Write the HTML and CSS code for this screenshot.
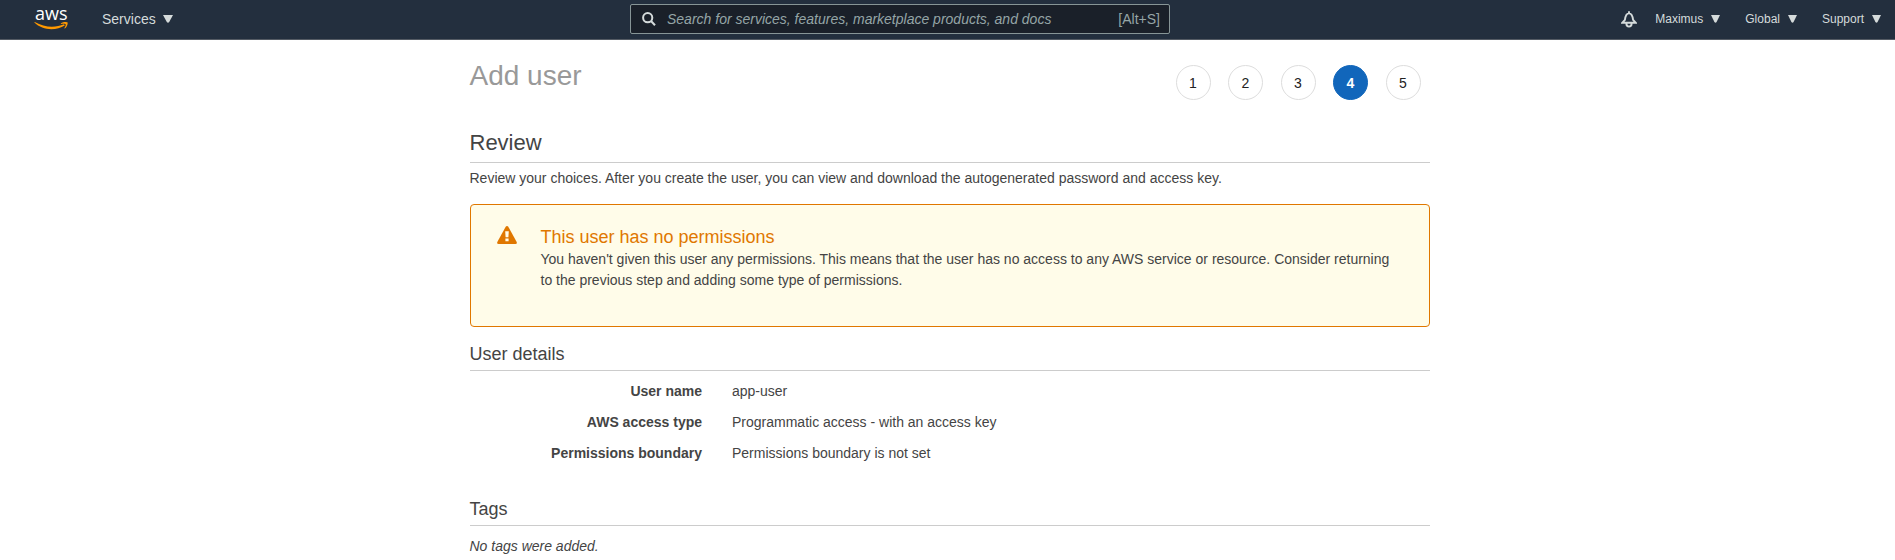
FILE: index.html
```html
<!DOCTYPE html>
<html lang="en">
<head>
<meta charset="utf-8">
<title>Add user</title>
<link rel="stylesheet" href="styles.css">
</head>
<body>
<header class="topbar">
  <div class="brand">
    <span class="brand-name">aws</span>
    <svg class="brand-smile" width="34" height="8" viewBox="0 0 34 8"><path d="M.3.600C8.500 8.700 22 9 30.800 3.600L30 2.200C21.500 6 10.500 5.600.8 0z" fill="#f90"/><path d="M26.800 1.300C29.500-.4 33-.2 33.600.6 34 1.700 32.800 5.200 30.900 6.600L30.300 6.200C31.600 4.100 32 2.700 31.600 2.200 31.200 1.600 29 1.800 27 1.900z" fill="#f90"/></svg>
  </div>
  <button class="nav services">Services <svg class="caret" width="10" height="8" viewBox="0 0 10 8"><path d="M0 0h10L6.200 7Q5 8.500 3.800 7z"/></svg></button>
  <div class="search">
    <svg class="search-icon" width="14" height="14" viewBox="0 0 14 14"><circle cx="5.700" cy="5.700" r="4.600"/><path d="M9 9l4 4.300"/></svg>
    <span class="search-hint">Search for services, features, marketplace products, and docs</span>
    <span class="search-key">[Alt+S]</span>
  </div>
  <div class="tools">
    <svg class="bell" width="16" height="17" viewBox="0 0 16 17"><path d="M1.200 11.800h13.600L12.100 8.900C11.600 5 11 2.400 8 2.400S4.400 5 3.900 8.900zM8 2.400V.3M5.400 12.800c0 3.700 5.200 3.700 5.200 0"/></svg>
    <button class="nav account">Maximus <svg class="caret" width="9" height="8" viewBox="0 0 10 8" preserveAspectRatio="none"><path d="M0 0h10L6.200 7Q5 8.500 3.800 7z"/></svg></button>
    <button class="nav region">Global <svg class="caret" width="9" height="8" viewBox="0 0 10 8" preserveAspectRatio="none"><path d="M0 0h10L6.200 7Q5 8.500 3.800 7z"/></svg></button>
    <button class="nav support">Support <svg class="caret" width="9" height="8" viewBox="0 0 10 8" preserveAspectRatio="none"><path d="M0 0h10L6.200 7Q5 8.500 3.800 7z"/></svg></button>
  </div>
</header>
<main class="page">
  <div class="page-head">
    <h1 class="page-title">Add user</h1>
    <ol class="steps">
      <li class="step">1</li><li class="step">2</li><li class="step">3</li><li class="step current">4</li><li class="step">5</li>
    </ol>
  </div>
  <h2 class="review-title">Review</h2>
  <p class="intro">Review your choices. After you create the user, you can view and download the autogenerated password and access key.</p>
  <section class="alert">
    <svg class="alert-icon" width="20" height="18" viewBox="0 0 20 18"><path d="M10 0Q10.800 0 11.300.8L19.700 16Q20.300 18 18.500 18h-17Q-.3 18 .3 16L8.700.8Q9.200 0 10 0z" fill="#e07700"/><path d="M8.200 5.300h3.600l-.4 6H8.600zM8.400 12.600h3.200v2.700H8.400z" fill="#fffce9"/></svg>
    <div>
      <h3 class="alert-title">This user has no permissions</h3>
      <p class="alert-text">You haven't given this user any permissions. This means that the user has no access to any AWS service or resource. Consider returning to the previous step and adding some type of permissions.</p>
    </div>
  </section>
  <h3 class="section-title">User details</h3>
  <dl class="details">
    <dt>User name</dt><dd>app-user</dd>
    <dt>AWS access type</dt><dd>Programmatic access - with an access key</dd>
    <dt>Permissions boundary</dt><dd>Permissions boundary is not set</dd>
  </dl>
  <h3 class="section-title">Tags</h3>
  <p class="empty">No tags were added.</p>
</main>
</body>
</html>
```
FILE: styles.css
```css
* { box-sizing: border-box; margin: 0; padding: 0; }
body { height: 560px; overflow: hidden; background: #fff; color: #444; font: 14px/21px "Liberation Sans", Arial, sans-serif; }
.topbar { height: 40px; background: #232f3e; border-bottom: 1px solid #545b64; display: grid; grid-template-columns: 102px 528px 540px 1fr; align-items: start; }
.brand { padding: 4px 0 0 34px; display: flex; flex-direction: column; }
.brand-name { height: 18px; padding-left: 1px; font: 500 18px/18px "Open Sans", "Noto Sans", sans-serif; color: #fff; }
.brand-smile { display: block; }
.nav { border: 0; background: none; color: #d5dbdb; font: 12px/38px "Liberation Sans", Arial, sans-serif; display: flex; align-items: center; white-space: nowrap; }
.services { font-size: 14px; gap: 7px; }
.caret { fill: #d5dbdb; flex: none; }
.search { height: 30px; margin-top: 4px; border: 1px solid #879596; border-radius: 2px; background: #1a2029; display: flex; align-items: center; padding: 0 9px 0 11px; font-size: 14px; color: #95a5a6; }
.search-icon { fill: none; stroke: #d5dbdb; stroke-width: 2; margin-right: 11px; }
.search-hint { font-style: italic; flex: 1; }
.tools { height: 38px; display: flex; align-items: center; justify-content: flex-end; padding-right: 14px; }
.tools .nav { gap: 8px; }
.bell { fill: none; stroke: #d5dbdb; stroke-width: 1.900; margin-right: 18px; }
.region { margin: 0 25px; }
.page { width: 960px; margin-left: 469.5px; }
.page-head { height: 86px; display: flex; justify-content: space-between; padding: 19px 9px 0 0; }
.page-title { padding-top: 1px; font-size: 28px; font-weight: 400; line-height: 32px; color: #999; }
.steps { list-style: none; display: flex; gap: 17.5px; padding-top: 6px; }
.step { width: 35px; height: 35px; border: 1px solid #ddd; border-radius: 50%; text-align: center; line-height: 35px; color: #222; }
.current { background: #1166bb; border-color: #1166bb; color: #fff; font-weight: 700; }
.review-title { height: 37px; border-bottom: 1px solid #ccc; font-size: 22px; font-weight: 400; line-height: 34px; }
.intro { padding-top: 5px; }
.alert { height: 123px; margin-top: 15px; border: 1px solid #e07700; border-radius: 4px; background: #fffce9; display: flex; align-items: flex-start; gap: 24px; padding: 21px 30px 0 26px; }
.alert-icon { flex: none; }
.alert-title { color: #e07700; font-size: 18px; font-weight: 400; line-height: 22px; }
.alert-text { padding-top: 1px; }
.section-title { height: 44px; padding-top: 16px; border-bottom: 1px solid #ccc; font-size: 18px; font-weight: 400; line-height: 22px; }
.details { height: 111px; display: grid; grid-template-columns: 232.5px 1fr; column-gap: 30px; grid-auto-rows: 31px; align-content: start; padding-top: 10px; }
.details dt { text-align: right; font-weight: 700; }
.empty { padding-top: 10px; font-style: italic; }
```
